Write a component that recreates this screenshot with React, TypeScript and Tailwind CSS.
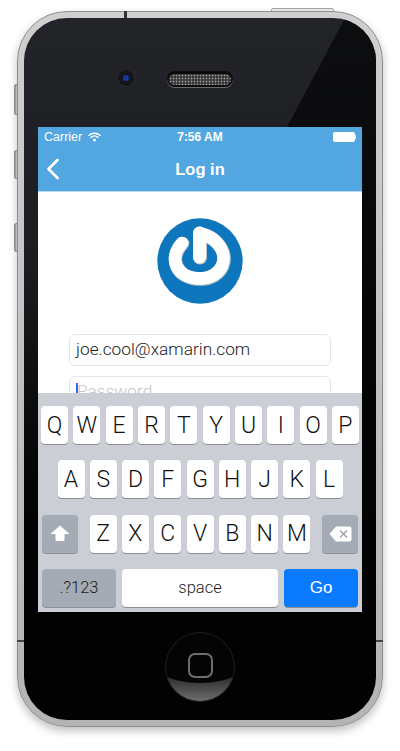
import React from "react";

const F = "font-['Liberation_Sans',Arial,sans-serif]";
const L = "font-['Roboto','Liberation_Sans',sans-serif] font-light";

function Key({ label }: { label: string }) {
  return (
    <div className={`w-[27px] h-[38px] rounded-[4px] bg-white shadow-[0_1px_0_#8e9096] flex items-center justify-center text-[23px] text-[#111] leading-none ${L}`}>
      {label}
    </div>
  );
}

function Logo() {
  const ring = "M25.5 25.5 C11 41 20 61 43 61 C66 61 76 38 57 22 C52 18 47 16.5 43 16";
  return (
    <svg width="86" height="86" viewBox="0 0 86 86" className="block">
      <defs>
        <filter id="soft" x="-20%" y="-20%" width="140%" height="140%">
          <feGaussianBlur stdDeviation="0.5" />
        </filter>
      </defs>
      <circle cx="43" cy="43" r="42.7" fill="#0e76bc" />
      <g fill="none" strokeLinecap="round" strokeLinejoin="round">
        <path d={ring} stroke="#c4c8cb" strokeWidth="13.5" />
        <path d="M43 15.5 L43 39.5" stroke="#c4c8cb" strokeWidth="14" />
        <g filter="url(#soft)" transform="translate(-0.5 -0.5)">
          <path d={ring} stroke="#ffffff" strokeWidth="12.5" />
          <path d="M43 15.5 L43 39.5" stroke="#ffffff" strokeWidth="13" />
        </g>
      </g>
    </svg>
  );
}

export default function App() {
  return (
    <div className={`w-[400px] h-[751px] bg-white overflow-hidden relative ${F}`}>
      {/* hardware buttons */}
      <div className="absolute left-[14px] top-[84px] w-[4px] h-[31px] bg-gradient-to-r from-[#9a9a9a] to-[#e4e4e4] border border-[#999] rounded-l-[2px]" />
      <div className="absolute left-[14px] top-[150px] w-[4px] h-[29px] bg-gradient-to-r from-[#9a9a9a] to-[#e4e4e4] border border-[#999] rounded-l-[2px]" />
      <div className="absolute left-[14px] top-[223px] w-[4px] h-[29px] bg-gradient-to-r from-[#9a9a9a] to-[#e4e4e4] border border-[#999] rounded-l-[2px]" />
      <div className="absolute left-[271px] top-[8px] w-[63px] h-[4px] bg-[#f0f0f0] border border-[#a5a5a5] rounded-t-[2px]" />

      {/* phone */}
      <div className="ml-[17px] mt-[11px] w-[366px] h-[716px] rounded-[50px] p-[6px] bg-gradient-to-b from-[#cfcfcf] to-[#b4b4b4] border border-[#8f8f8f] shadow-[0_4px_9px_rgba(0,0,0,0.25)] relative">
        <div className="absolute left-[106px] -top-px w-[3px] h-[7px] bg-[#333]" />
        <div className="absolute -left-px top-[628px] w-[7px] h-[2px] bg-[#444]" />
        <div className="absolute -right-px top-[628px] w-[7px] h-[2px] bg-[#444]" />

        <div className="w-full h-full rounded-[43px] bg-gradient-to-b from-[#232429] via-[#1c1d21] via-35% to-[#020202] to-75% relative overflow-hidden flex flex-col items-center">
          {/* glass sheen edge */}
          <div className="absolute right-0 top-0 w-[148px] h-[520px] bg-gradient-to-b from-[#0d0e10] to-[#030303] [clip-path:polygon(117px_0,100%_0,100%_100%,0_220px)]" />

          {/* earpiece row */}
          <div className="relative h-[109px] w-full shrink-0">
            <div className="absolute left-[93px] top-[51px] w-[18px] h-[18px] rounded-full bg-[#14151a] border border-[#2a2b30] flex items-center justify-center">
              <div className="w-[6px] h-[6px] rounded-full bg-[#123a96]" />
            </div>
            <div className="absolute left-[143px] top-[53px] w-[66px] h-[16px] rounded-full bg-[#0b0b0c] px-[2px] pt-[3px] pb-[2px] shadow-[0_1px_0_#6a6b6f]">
              <div className="w-full h-full rounded-full bg-[radial-gradient(#a0a0a0_0.7px,#3a3a3a_1.1px)] bg-[length:3px_3px]" />
            </div>
          </div>

          {/* screen */}
          <div className="relative w-[324px] h-[485px] shrink-0 bg-white overflow-hidden">
            <div className="h-[65px] bg-[#53a7e0] border-b border-[#b9d9ef] text-white">
              <div className="h-[20px] flex items-center justify-between px-[6px] text-[12.5px] relative">
                <div className="flex items-center gap-[6px]">
                  <span>Carrier</span>
                  <svg width="13" height="10" viewBox="0 0 13 10" fill="none" stroke="white" strokeLinecap="round">
                    <path d="M1 3.3 C4 0.4 9 0.4 12 3.3" strokeWidth="1.5" />
                    <path d="M3 5.4 C5 3.6 8 3.6 10 5.4" strokeWidth="1.5" />
                    <circle cx="6.5" cy="8" r="1.5" fill="white" stroke="none" />
                  </svg>
                </div>
                <span className="absolute left-0 right-0 text-center font-bold text-[12px]">7:56 AM</span>
                <div className="flex items-center">
                  <div className="w-[22px] h-[10px] rounded-[2px] bg-white" />
                  <div className="w-[1.5px] h-[4px] bg-white rounded-r-[1px]" />
                </div>
              </div>
              <div className="h-[44px] flex items-center relative">
                <svg className="ml-[8px]" width="14" height="22" viewBox="0 0 14 22" fill="none" stroke="white" strokeWidth="2.8" strokeLinecap="round" strokeLinejoin="round">
                  <path d="M11.5 2 L2.5 11 L11.5 20" />
                </svg>
                <span className="absolute left-0 right-0 text-center font-bold text-[16.5px]">Log in</span>
              </div>
            </div>

            <div className="flex flex-col items-center">
              <div className="mt-[26px]">
                <Logo />
              </div>
              <div className={`mt-[30px] w-[262px] h-[32px] rounded-[6px] border border-[#e6e6e6] flex items-center pl-[6px] text-[17.3px] text-[#1c1c1c] ${L}`}>
                joe.cool@xamarin.com
              </div>
              <div className={`mt-[10px] w-[262px] h-[32px] rounded-[6px] border border-[#e6e6e6] flex items-center pl-[6px] text-[17.3px] text-[#c4c4c8] ${L}`}>
                <div className="w-[2px] h-[19px] bg-[#2f6bf2]" />
                <span className="-ml-[1px]">Password</span>
              </div>
            </div>

            {/* keyboard overlays the form */}
            <div className="absolute left-0 right-0 bottom-0 h-[219px] bg-[#cbced5] pt-[13px] pb-[5px] flex flex-col justify-between">
              <div className="flex justify-between px-[3px]">
                {"QWERTYUIOP".split("").map((k) => (
                  <Key key={k} label={k} />
                ))}
              </div>
              <div className="flex justify-between px-[19.5px]">
                {"ASDFGHJKL".split("").map((k) => (
                  <Key key={k} label={k} />
                ))}
              </div>
              <div className="flex justify-between px-[4px]">
                <div className="w-[36px] h-[38px] rounded-[4px] bg-[#a5abb5] shadow-[0_1px_0_#8e9096] flex items-center justify-center">
                  <svg width="20" height="17" viewBox="0 0 20 17" fill="white">
                    <path d="M10 0.5 L19.5 9 H14.5 V15 Q14.5 16 13.5 16 H6.5 Q5.5 16 5.5 15 V9 H0.5 Z" />
                  </svg>
                </div>
                <div className="flex gap-[5.3px]">
                  {"ZXCVBNM".split("").map((k) => (
                    <Key key={k} label={k} />
                  ))}
                </div>
                <div className="w-[36px] h-[38px] rounded-[4px] bg-[#a5abb5] shadow-[0_1px_0_#8e9096] flex items-center justify-center">
                  <svg width="23" height="16" viewBox="0 0 23 16">
                    <path d="M7 0.5 H20.5 Q22.5 0.5 22.5 2.5 V13.5 Q22.5 15.5 20.5 15.5 H7 L0.5 8 Z" fill="white" />
                    <path d="M11 4.5 L18 11.5 M18 4.5 L11 11.5" stroke="#9aa0aa" strokeWidth="1.4" />
                  </svg>
                </div>
              </div>
              <div className="flex justify-between px-[4px]">
                <div className={`w-[74px] h-[38px] rounded-[4px] bg-[#a5abb5] shadow-[0_1px_0_#8e9096] flex items-center justify-center text-[16.5px] text-[#1c1c1c] ${L}`}>
                  .?123
                </div>
                <div className={`w-[156px] h-[38px] rounded-[4px] bg-white shadow-[0_1px_0_#8e9096] flex items-center justify-center text-[16.5px] text-[#1c1c1c] ${L}`}>
                  space
                </div>
                <div className="w-[74px] h-[38px] rounded-[4px] bg-[#0a7aff] shadow-[0_1px_0_#8e9096] flex items-center justify-center text-[17px] text-white">
                  Go
                </div>
              </div>
            </div>
          </div>

          {/* home button */}
          <div className="mt-[20px] relative w-[70px] h-[70px] rounded-full border border-[#1e1e1e] overflow-hidden flex items-center justify-center bg-gradient-to-b from-[#262626] from-60% to-[#6e6e6e]">
            <div className="absolute left-[-21px] top-[-10px] w-[110px] h-[60px] rounded-[50%] bg-[#040404]" />
            <div className="relative w-[25px] h-[25px] rounded-[7px] border-2 border-[#6e6e6e] -mt-[3px]" />
          </div>
        </div>
      </div>
    </div>
  );
}
